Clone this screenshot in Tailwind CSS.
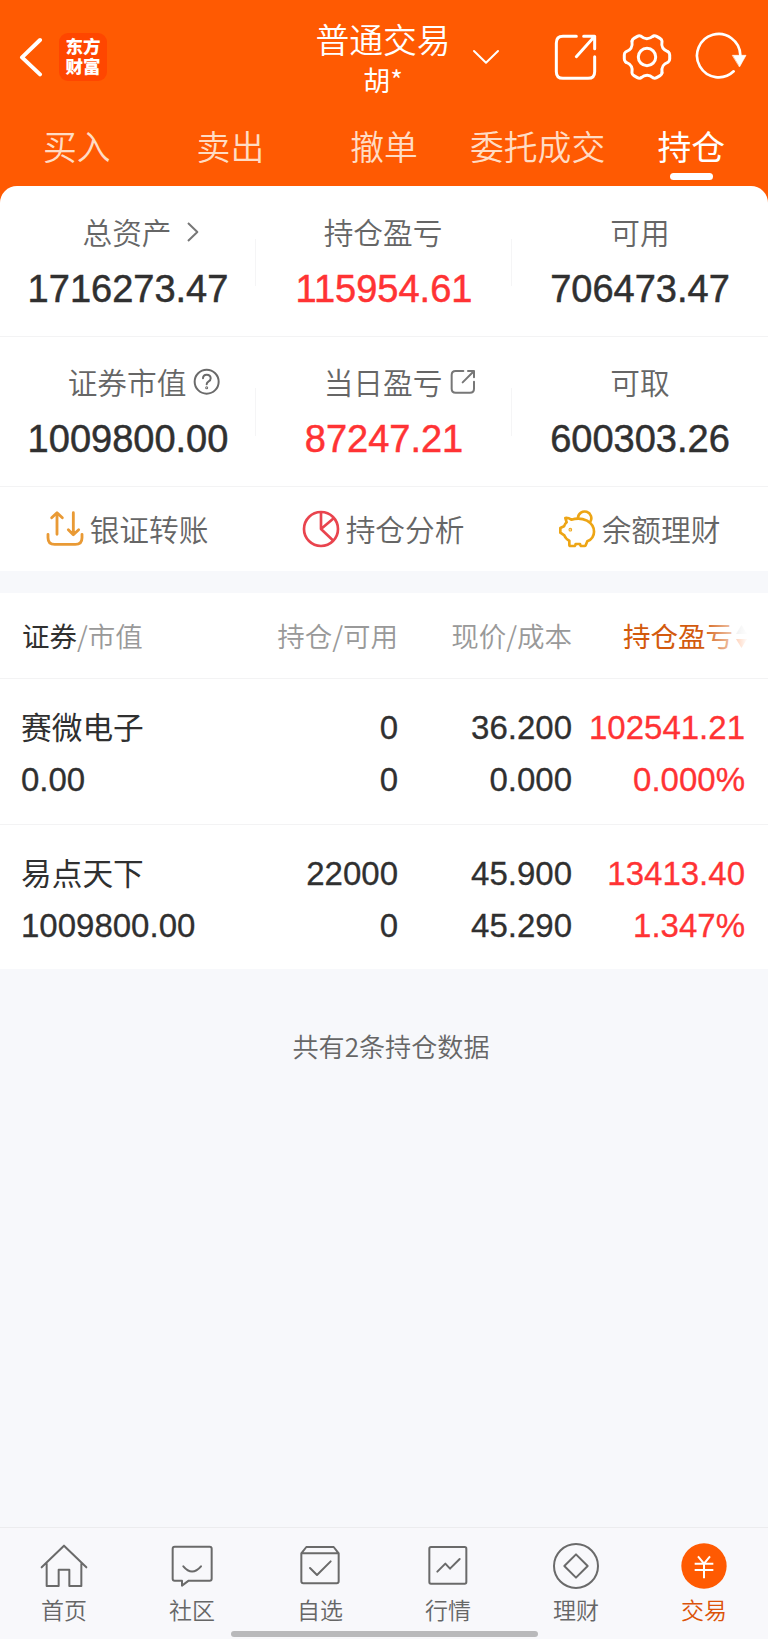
<!DOCTYPE html>
<html lang="zh-CN">
<head>
<meta charset="utf-8">
<meta name="viewport" content="width=device-width, initial-scale=1">
<title>普通交易 - 持仓</title>
<script src="https://cdn.jsdelivr.net/npm/@tailwindcss/browser@4"></script>
</head>
<body class="bg-[#f7f8fb] font-['Noto_Sans_CJK_SC',sans-serif] text-[#666]">
<div class="flex h-[1639px] w-[768px] flex-col overflow-hidden">

  <div class="bg-[#ff5a02]">
    <header class="flex h-[118px] text-white">
      <div class="flex flex-1 items-start pt-[33px] pl-[18px]">
        <svg class="mt-[4px] h-[40px] w-[26px]" viewBox="54 111 78 120" fill="none" stroke="#fff" stroke-width="12" stroke-linecap="round" stroke-linejoin="round"><path d="M120 120 66 172 120 223"/></svg>
        <div class="ml-[15px] flex h-[48px] w-[48px] flex-col items-center justify-center rounded-[9px] bg-[#ff4600] pb-[2px] text-[17.5px] leading-[20px] font-black"><span>东方</span><span>财富</span></div>
      </div>
      <div class="flex w-[136px] flex-col items-center">
        <div class="mt-[19px] text-[33.8px] leading-[40px] font-[350] whitespace-nowrap">普通交易</div>
        <div class="mt-px text-[27px] leading-[40px]">胡*</div>
      </div>
      <div class="flex flex-1 items-start pl-[20px]">
        <svg class="mt-[46px] h-[20px] w-[30px]" viewBox="262 138 90 60" fill="none" stroke="#fff" stroke-width="6" stroke-linecap="round" stroke-linejoin="round"><path d="M271 153 307 188 343 153"/></svg>
        <svg class="mt-[32px] ml-[52px] h-[50px] w-[46px]" viewBox="508 96 138 150" fill="none" stroke="#fff" stroke-width="9" stroke-linecap="round" stroke-linejoin="round"><path d="M578 109H538Q518 109 518 129V215Q518 235 538 235H613Q633 235 633 215V170M600 109H633V146M633 109 578 170"/></svg>
        <svg class="mt-[31px] ml-[22px] h-[52px] w-[52px]" viewBox="-26 -26 52 52" fill="none" stroke="#fff" stroke-width="3" stroke-linecap="round" stroke-linejoin="round">
          <defs><path id="tooth" d="M21.2-5.100Q22.700-4 22.700-2V2Q22.700 4 21.200 5.100C15.800 7 14.200 10 15 15.800"/></defs>
          <use href="#tooth"/><use href="#tooth" transform="rotate(60)"/><use href="#tooth" transform="rotate(120)"/><use href="#tooth" transform="rotate(180)"/><use href="#tooth" transform="rotate(240)"/><use href="#tooth" transform="rotate(300)"/>
          <circle r="8.700"/>
        </svg>
        <svg class="mt-[32px] ml-[21px] h-[50px] w-[54px]" viewBox="930 96 162 150" fill="none" stroke="#fff" stroke-width="8" stroke-linecap="round"><path d="M1069 165A65 65 0 1 0 1049 214"/><path d="M1046 166H1086L1067 200Z" fill="#fff" stroke="#fff" stroke-width="2" stroke-linejoin="round"/></svg>
      </div>
    </header>

    <nav class="grid h-[68px] grid-cols-5 text-center text-[33.8px] leading-[56px] font-[350] text-[#ffdcc4]">
      <div>买入</div>
      <div>卖出</div>
      <div>撤单</div>
      <div class="whitespace-nowrap">委托成交</div>
      <div class="flex flex-col items-center text-white"><span class="h-[55px] font-normal">持仓</span><span class="h-[7px] w-[43px] rounded-full bg-white"></span></div>
    </nav>
    <div class="h-[17px] rounded-t-[17px] bg-white"></div>
  </div>

  <main class="flex-1">
    <section>
      <div class="grid h-[134px] grid-cols-3 border-b border-[#f3f3f4] bg-white text-center">
        <div class="flex flex-col items-center pt-[9px]">
          <div class="relative pr-[2px] text-[29.7px] leading-[40px] font-[350]">总资产
            <svg class="absolute top-[9px] left-full ml-[11px] h-[22px] w-[16px]" viewBox="551 62 48 66" fill="none" stroke="#777" stroke-width="6" stroke-linejoin="round"><path d="M560 68 588 95 560 122"/></svg>
          </div>
          <div class="mt-[17px] font-['Liberation_Sans'] text-[38px] leading-[40px] text-[#303030] [-webkit-text-stroke:0.5px]">1716273.47</div>
        </div>
        <div class="relative flex flex-col items-center pt-[9px]">
          <span class="absolute top-[36px] left-[-1px] h-[47px] w-px bg-[#f5f5f6]"></span>
          <div class="pr-[2px] text-[29.7px] leading-[40px] font-[350]">持仓盈亏</div>
          <div class="mt-[17px] font-['Liberation_Sans'] text-[38px] leading-[40px] text-[#ff3334] [-webkit-text-stroke:0.5px]">115954.61</div>
        </div>
        <div class="relative flex flex-col items-center pt-[9px]">
          <span class="absolute top-[36px] left-[-1px] h-[47px] w-px bg-[#f5f5f6]"></span>
          <div class="text-[29.7px] leading-[40px] font-[350]">可用</div>
          <div class="mt-[17px] font-['Liberation_Sans'] text-[38px] leading-[40px] text-[#303030] [-webkit-text-stroke:0.5px]">706473.47</div>
        </div>
      </div>
      <div class="grid h-[150px] grid-cols-3 border-b border-[#f3f3f4] bg-white text-center">
        <div class="flex flex-col items-center pt-[25px]">
          <div class="relative pr-[2px] text-[29.7px] leading-[40px] font-[350]">证券市值
            <svg class="absolute top-[6px] left-full ml-[5px] h-[27px] w-[27px]" viewBox="579 504 81 81" fill="none" stroke="#6a6a6a" stroke-width="6" stroke-linecap="round"><circle cx="620" cy="545" r="36"/><path d="M609 535Q609 524 620 524 632 524 632 535 632 541 626 544 620 548 620 553"/><circle cx="620" cy="563" r="1.500"/></svg>
          </div>
          <div class="mt-[17px] font-['Liberation_Sans'] text-[38px] leading-[40px] text-[#303030] [-webkit-text-stroke:0.5px]">1009800.00</div>
        </div>
        <div class="relative flex flex-col items-center pt-[25px]">
          <span class="absolute top-[51px] left-[-1px] h-[48px] w-px bg-[#f5f5f6]"></span>
          <div class="relative pr-[2px] text-[29.7px] leading-[40px] font-[350]">当日盈亏
            <svg class="absolute top-[7px] left-full ml-[6px] h-[26px] w-[26px]" viewBox="196 506 78 78" fill="none" stroke="#777" stroke-width="6" stroke-linecap="round" stroke-linejoin="round"><path d="M236 512H213Q201 512 201 524V565Q201 577 213 577H256Q268 577 268 565V544M250 512H268V531M268 512 234 546"/></svg>
          </div>
          <div class="mt-[17px] font-['Liberation_Sans'] text-[38px] leading-[40px] text-[#ff3334] [-webkit-text-stroke:0.5px]">87247.21</div>
        </div>
        <div class="relative flex flex-col items-center pt-[25px]">
          <span class="absolute top-[51px] left-[-1px] h-[48px] w-px bg-[#f5f5f6]"></span>
          <div class="text-[29.7px] leading-[40px] font-[350]">可取</div>
          <div class="mt-[17px] font-['Liberation_Sans'] text-[38px] leading-[40px] text-[#303030] [-webkit-text-stroke:0.5px]">600303.26</div>
        </div>
      </div>
      <div class="grid h-[84px] grid-cols-3 bg-white text-[29.7px] leading-[40px] font-[350]">
        <div class="flex justify-center gap-[6px] pt-[22px] pr-[2px]">
          <svg class="mt-px h-[38px] w-[38px]" viewBox="138 329 114 114" fill="none" stroke="#e99a35" stroke-width="8.500" stroke-linecap="round" stroke-linejoin="round"><path d="M171 402V338M155 352 171 337 187 352M220 337V401M205 388 220 403 236 388M144 402V412Q144 432 164 432H226Q246 432 246 412V402"/></svg>
          <span>银证转账</span>
        </div>
        <div class="flex justify-center gap-[6px] pt-[22px] pr-[2px]">
          <svg class="mt-px h-[38px] w-[38px]" viewBox="906 329 114 114" fill="none" stroke="#e9444e" stroke-width="8" stroke-linejoin="round"><circle cx="963" cy="386" r="51"/><path d="M963 335V386L1000 421M963 386 1002 353"/></svg>
          <span>持仓分析</span>
        </div>
        <div class="flex justify-center gap-[6px] pt-[22px] pr-[2px]">
          <svg class="mt-px h-[38px] w-[38px]" viewBox="521 329 114 114" fill="none" stroke="#eda515" stroke-width="8" stroke-linecap="round" stroke-linejoin="round"><path d="M543 353Q552 352 561 358 586 350 608 361C637 378 635 412 609 423L604 435Q603 437 600 437H591Q588 437 587 431H574Q573 437 570 437H559Q555 437 555 433V421Q544 416 540 405L528 397V383L539 378Q541 371 547 366Z"/><path d="M581 352A20 20 0 1 1 618 364"/><circle cx="558" cy="388" r="1.500" fill="#eda515"/></svg>
          <span>余额理财</span>
        </div>
      </div>
    </section>

    <section class="mt-[22px] bg-white text-[#303030]">
      <div class="grid h-[86px] grid-cols-[200px_198px_174px_1fr] border-b border-[#f3f3f4] pt-[22px] text-[27.5px] leading-[40px] font-[350] text-[#999]">
        <div class="pl-[22px]"><span class="font-normal text-[#303030]">证券</span>/市值</div>
        <div class="text-right">持仓/可用</div>
        <div class="text-right">现价/成本</div>
        <div class="relative flex h-[40px] items-center pl-[51px] font-normal text-[#d35a0d]">持仓盈亏
          <svg class="mt-[3px] ml-[2px] h-[24px] w-[13px]" viewBox="0 0 13 24"><path d="M1 9 6.500 0 12 9Z" fill="#ccc"/><path d="M1 14H12L6.500 23Z" fill="#ff5a02"/></svg>
          <span class="absolute top-0 right-[20px] h-[40px] w-[46px] bg-linear-to-r from-white/0 to-white/95 to-95%"></span>
        </div>
      </div>
      <div class="grid h-[146px] grid-cols-[200px_198px_174px_173px] border-b border-[#f3f3f4] pt-[23px] font-['Liberation_Sans','Noto_Sans_CJK_SC',sans-serif] text-[33px] leading-[51.500px]">
        <div class="pl-[21px]"><div class="-mt-[2px] mb-[2px] font-['Noto_Sans_CJK_SC'] text-[30.700px]">赛微电子</div><div class="[-webkit-text-stroke:0.3px]">0.00</div></div>
        <div class="text-right [-webkit-text-stroke:0.3px]"><div>0</div><div>0</div></div>
        <div class="text-right [-webkit-text-stroke:0.3px]"><div>36.200</div><div>0.000</div></div>
        <div class="text-right text-[#ff3334] [-webkit-text-stroke:0.3px]"><div>102541.21</div><div>0.000%</div></div>
      </div>
      <div class="grid h-[144px] grid-cols-[200px_198px_174px_173px] pt-[23px] font-['Liberation_Sans','Noto_Sans_CJK_SC',sans-serif] text-[33px] leading-[51.500px]">
        <div class="pl-[21px]"><div class="-mt-[2px] mb-[2px] font-['Noto_Sans_CJK_SC'] text-[30.700px]">易点天下</div><div class="[-webkit-text-stroke:0.3px]">1009800.00</div></div>
        <div class="text-right [-webkit-text-stroke:0.3px]"><div>22000</div><div>0</div></div>
        <div class="text-right [-webkit-text-stroke:0.3px]"><div>45.900</div><div>45.290</div></div>
        <div class="text-right text-[#ff3334] [-webkit-text-stroke:0.3px]"><div>13413.40</div><div>1.347%</div></div>
      </div>
    </section>
    <p class="mt-[57px] pl-[14px] text-center text-[26.100px] leading-[40px] font-[350]">共有2条持仓数据</p>
  </main>

  <footer class="flex h-[112px] flex-col items-center border-t border-[#ececee] bg-[#f8f8fb]">
    <div class="grid h-[103px] w-full grid-cols-6 text-center text-[23px] leading-[30px] font-[350]">
      <div class="flex flex-col items-center pt-[13px]">
        <svg class="h-[50px] w-[50px]" viewBox="118 92 150 150" fill="none" stroke="#6a6a6a" stroke-width="6" stroke-linecap="round" stroke-linejoin="round"><path d="M126 171 193 106 260 171M141 160V227H177V178H209V227H245V160"/></svg>
        <span class="mt-[3px]">首页</span>
      </div>
      <div class="flex flex-col items-center pt-[13px]">
        <svg class="h-[50px] w-[50px]" viewBox="501 92 150 150" fill="none" stroke="#6a6a6a" stroke-width="6" stroke-linecap="round" stroke-linejoin="round"><path d="M524 109H629Q635 109 635 115V205Q635 211 629 211H566L546 226V211H524Q518 211 518 205V115Q518 109 524 109ZM550 168Q576 199 603 168"/></svg>
        <span class="mt-[3px]">社区</span>
      </div>
      <div class="flex flex-col items-center pt-[13px]">
        <svg class="h-[50px] w-[50px]" viewBox="884 92 150 150" fill="none" stroke="#6a6a6a" stroke-width="6" stroke-linecap="round" stroke-linejoin="round"><path d="M903 129 918 110H1000L1015 129V213Q1015 219 1009 219H909Q903 219 903 213ZM903 129H1015M929 173 950 194 991 153"/></svg>
        <span class="mt-[3px]">自选</span>
      </div>
      <div class="flex flex-col items-center pt-[13px]">
        <svg class="h-[50px] w-[50px]" viewBox="117 92 150 150" fill="none" stroke="#6a6a6a" stroke-width="6" stroke-linecap="round" stroke-linejoin="round"><rect x="136" y="110" width="111" height="110" rx="5"/><path d="M160 184 184 160 198 175 227 146"/></svg>
        <span class="mt-[3px]">行情</span>
      </div>
      <div class="flex flex-col items-center pt-[13px]">
        <svg class="h-[50px] w-[50px]" viewBox="501 92 150 150" fill="none" stroke="#6a6a6a" stroke-width="6" stroke-linejoin="round"><circle cx="576" cy="167" r="66"/><path d="M576 132 611 167 576 202 541 167Z"/></svg>
        <span class="mt-[3px]">理财</span>
      </div>
      <div class="flex flex-col items-center pt-[13px] text-[#dc5309]">
        <svg class="h-[50px] w-[50px]" viewBox="884 90 150 150" fill="none" stroke="#fff" stroke-width="6"><circle cx="959" cy="165" r="68" fill="#ff5a02" stroke="none"/><path d="M941 136 959 158 977 136M931 158H987M931 177H987M959 157V202"/></svg>
        <span class="mt-[3px]">交易</span>
      </div>
    </div>
    <div class="h-[6px] w-[307px] shrink-0 rounded-full bg-[#b9b9bb]"></div>
  </footer>
</div>
</body>
</html>
